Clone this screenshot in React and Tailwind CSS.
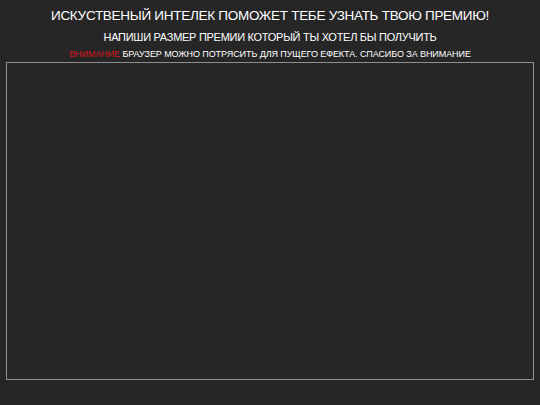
export default function App() {
  return (
    <div className="w-[540px] h-[405px] bg-[#262626] text-white flex flex-col items-center" style={{ fontFamily: '"Liberation Sans", Arial, sans-serif' }}>
      <h1 className="text-[13.5px] leading-[16px] tracking-[-0.28px] mt-[8px]">ИСКУСТВЕНЫЙ ИНТЕЛЕК ПОМОЖЕТ ТЕБЕ УЗНАТЬ ТВОЮ ПРЕМИЮ!</h1>
      <p className="text-[11px] leading-[13px] tracking-[-0.28px] mt-[7px]">НАПИШИ РАЗМЕР ПРЕМИИ КОТОРЫЙ ТЫ ХОТЕЛ БЫ ПОЛУЧИТЬ</p>
      <p className="text-[9px] leading-[11px] tracking-[-0.08px] mt-[5px]"><span className="text-[#d4161b]">ВНИМАНИЕ</span> БРАУЗЕР МОЖНО ПОТРЯСИТЬ ДЛЯ ПУЩЕГО ЕФЕКТА. СПАСИБО ЗА ВНИМАНИЕ</p>
      <div className="mt-[2px] w-[528px] h-[318px] border border-[#8f8f8f] bg-[#262626]"></div>
    </div>
  );
}
